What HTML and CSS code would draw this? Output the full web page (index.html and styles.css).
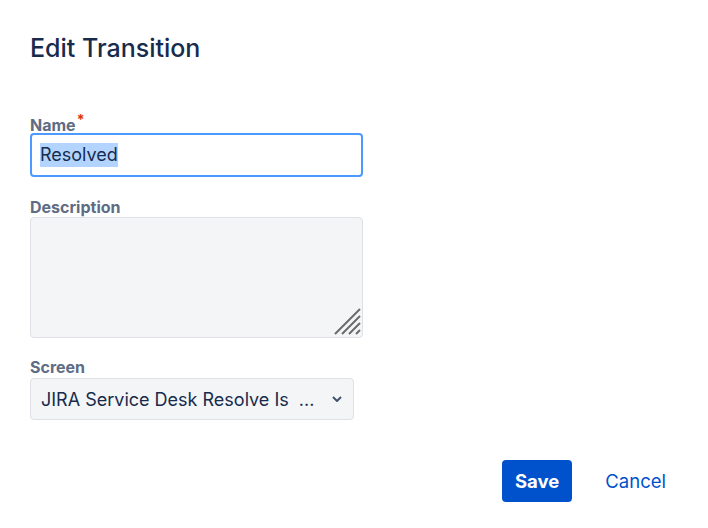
FILE: index.html
```html
<!DOCTYPE html>
<html lang="en">
<head>
  <meta charset="UTF-8">
  <meta name="viewport" content="width=device-width, initial-scale=1.0">
  <title>Edit Transition</title>
  <link rel="stylesheet" href="styles.css">
</head>
<body>
  <div class="dialog">
    <h1>Edit Transition</h1>

    <form class="transition-form">
      <label class="field-label" for="name">Name<span class="required">*</span></label>
      <div id="name" class="text-field focused"><span class="selected">Resolved</span></div>

      <label class="field-label desc-label" for="description">Description</label>
      <div class="textarea-wrap">
        <textarea id="description" class="text-area"></textarea>
        <svg class="resize-grip" width="27" height="27" viewBox="0 0 27 27">
          <path d="M1 26 L26 1 M8 26 L26 8 M15 26 L26 15 M22 26 L26 22" stroke="#6b6b6b" stroke-width="2" fill="none"/>
        </svg>
      </div>

      <label class="field-label screen-label">Screen</label>
      <div class="select-field">
        <span class="select-value">JIRA Service Desk Resolve Is &nbsp;...</span>
        <svg class="chevron" width="10" height="6" viewBox="0 0 10 6">
          <path d="M1 1 L5 5 L9 1" stroke="#42526e" stroke-width="2" fill="none"/>
        </svg>
      </div>

      <div class="footer">
        <button type="button" class="btn btn-primary">Save</button>
        <button type="button" class="btn btn-link">Cancel</button>
      </div>
    </form>
  </div>
</body>
</html>
```

FILE: styles.css
```css
body {
  margin: 0;
  font-family: Inter, "Noto Sans", sans-serif;
  color: #172b4d;
  background: #fff;
}

.dialog {
  padding: 33px 0 0 30px;
}

h1 {
  margin: 0;
  font-size: 25px;
  line-height: 30px;
  font-weight: 500;
  color: #172b4d;
}

.transition-form {
  display: flex;
  flex-direction: column;
  align-items: flex-start;
  margin-top: 53px;
}

.field-label {
  font-size: 16px;
  line-height: 18px;
  font-weight: 700;
  color: #5e6c84;
  margin-bottom: 1px;
}

.required {
  color: #de350b;
  font-size: 14px;
  line-height: 0;
  vertical-align: 6px;
  margin-left: 1px;
}

.text-field {
  box-sizing: border-box;
  width: 333px;
  height: 44px;
  margin-top: -2px;
  padding: 0 8px;
  display: flex;
  align-items: center;
  border: 2px solid #4c9aff;
  border-radius: 4px;
  background: #fff;
  font-size: 18px;
  line-height: 24px;
  color: #172b4d;
}

.selected {
  background: #b3d4ff;
}

.desc-label {
  margin-top: 21px;
}

.textarea-wrap {
  position: relative;
  width: 333px;
  height: 121px;
}

.text-area {
  box-sizing: border-box;
  width: 100%;
  height: 100%;
  margin: 0;
  border: 1px solid #dfe1e6;
  border-radius: 4px;
  background: #f4f5f7;
  resize: none;
  display: block;
}

.resize-grip {
  position: absolute;
  right: 2px;
  bottom: 3px;
}

.screen-label {
  margin-top: 20px;
  margin-bottom: 2px;
}

.select-field {
  box-sizing: border-box;
  width: 324px;
  height: 42px;
  padding: 0 11px 0 10px;
  display: flex;
  align-items: center;
  justify-content: space-between;
  border: 1px solid #dfe1e6;
  border-radius: 4px;
  background: #f4f5f7;
  font-size: 18px;
  color: #172b4d;
  white-space: nowrap;
}

.footer {
  align-self: stretch;
  display: flex;
  justify-content: flex-end;
  gap: 21px;
  margin-top: 40px;
  padding-right: 30px;
}

.btn {
  height: 42px;
  border: none;
  border-radius: 4px;
  font-family: inherit;
  font-size: 18.5px;
  cursor: pointer;
}

.btn-primary {
  background: #0052cc;
  color: #fff;
  font-weight: 700;
  padding: 0 13px;
}

.btn-link {
  background: none;
  color: #0052cc;
  padding: 0 12px;
}
```
